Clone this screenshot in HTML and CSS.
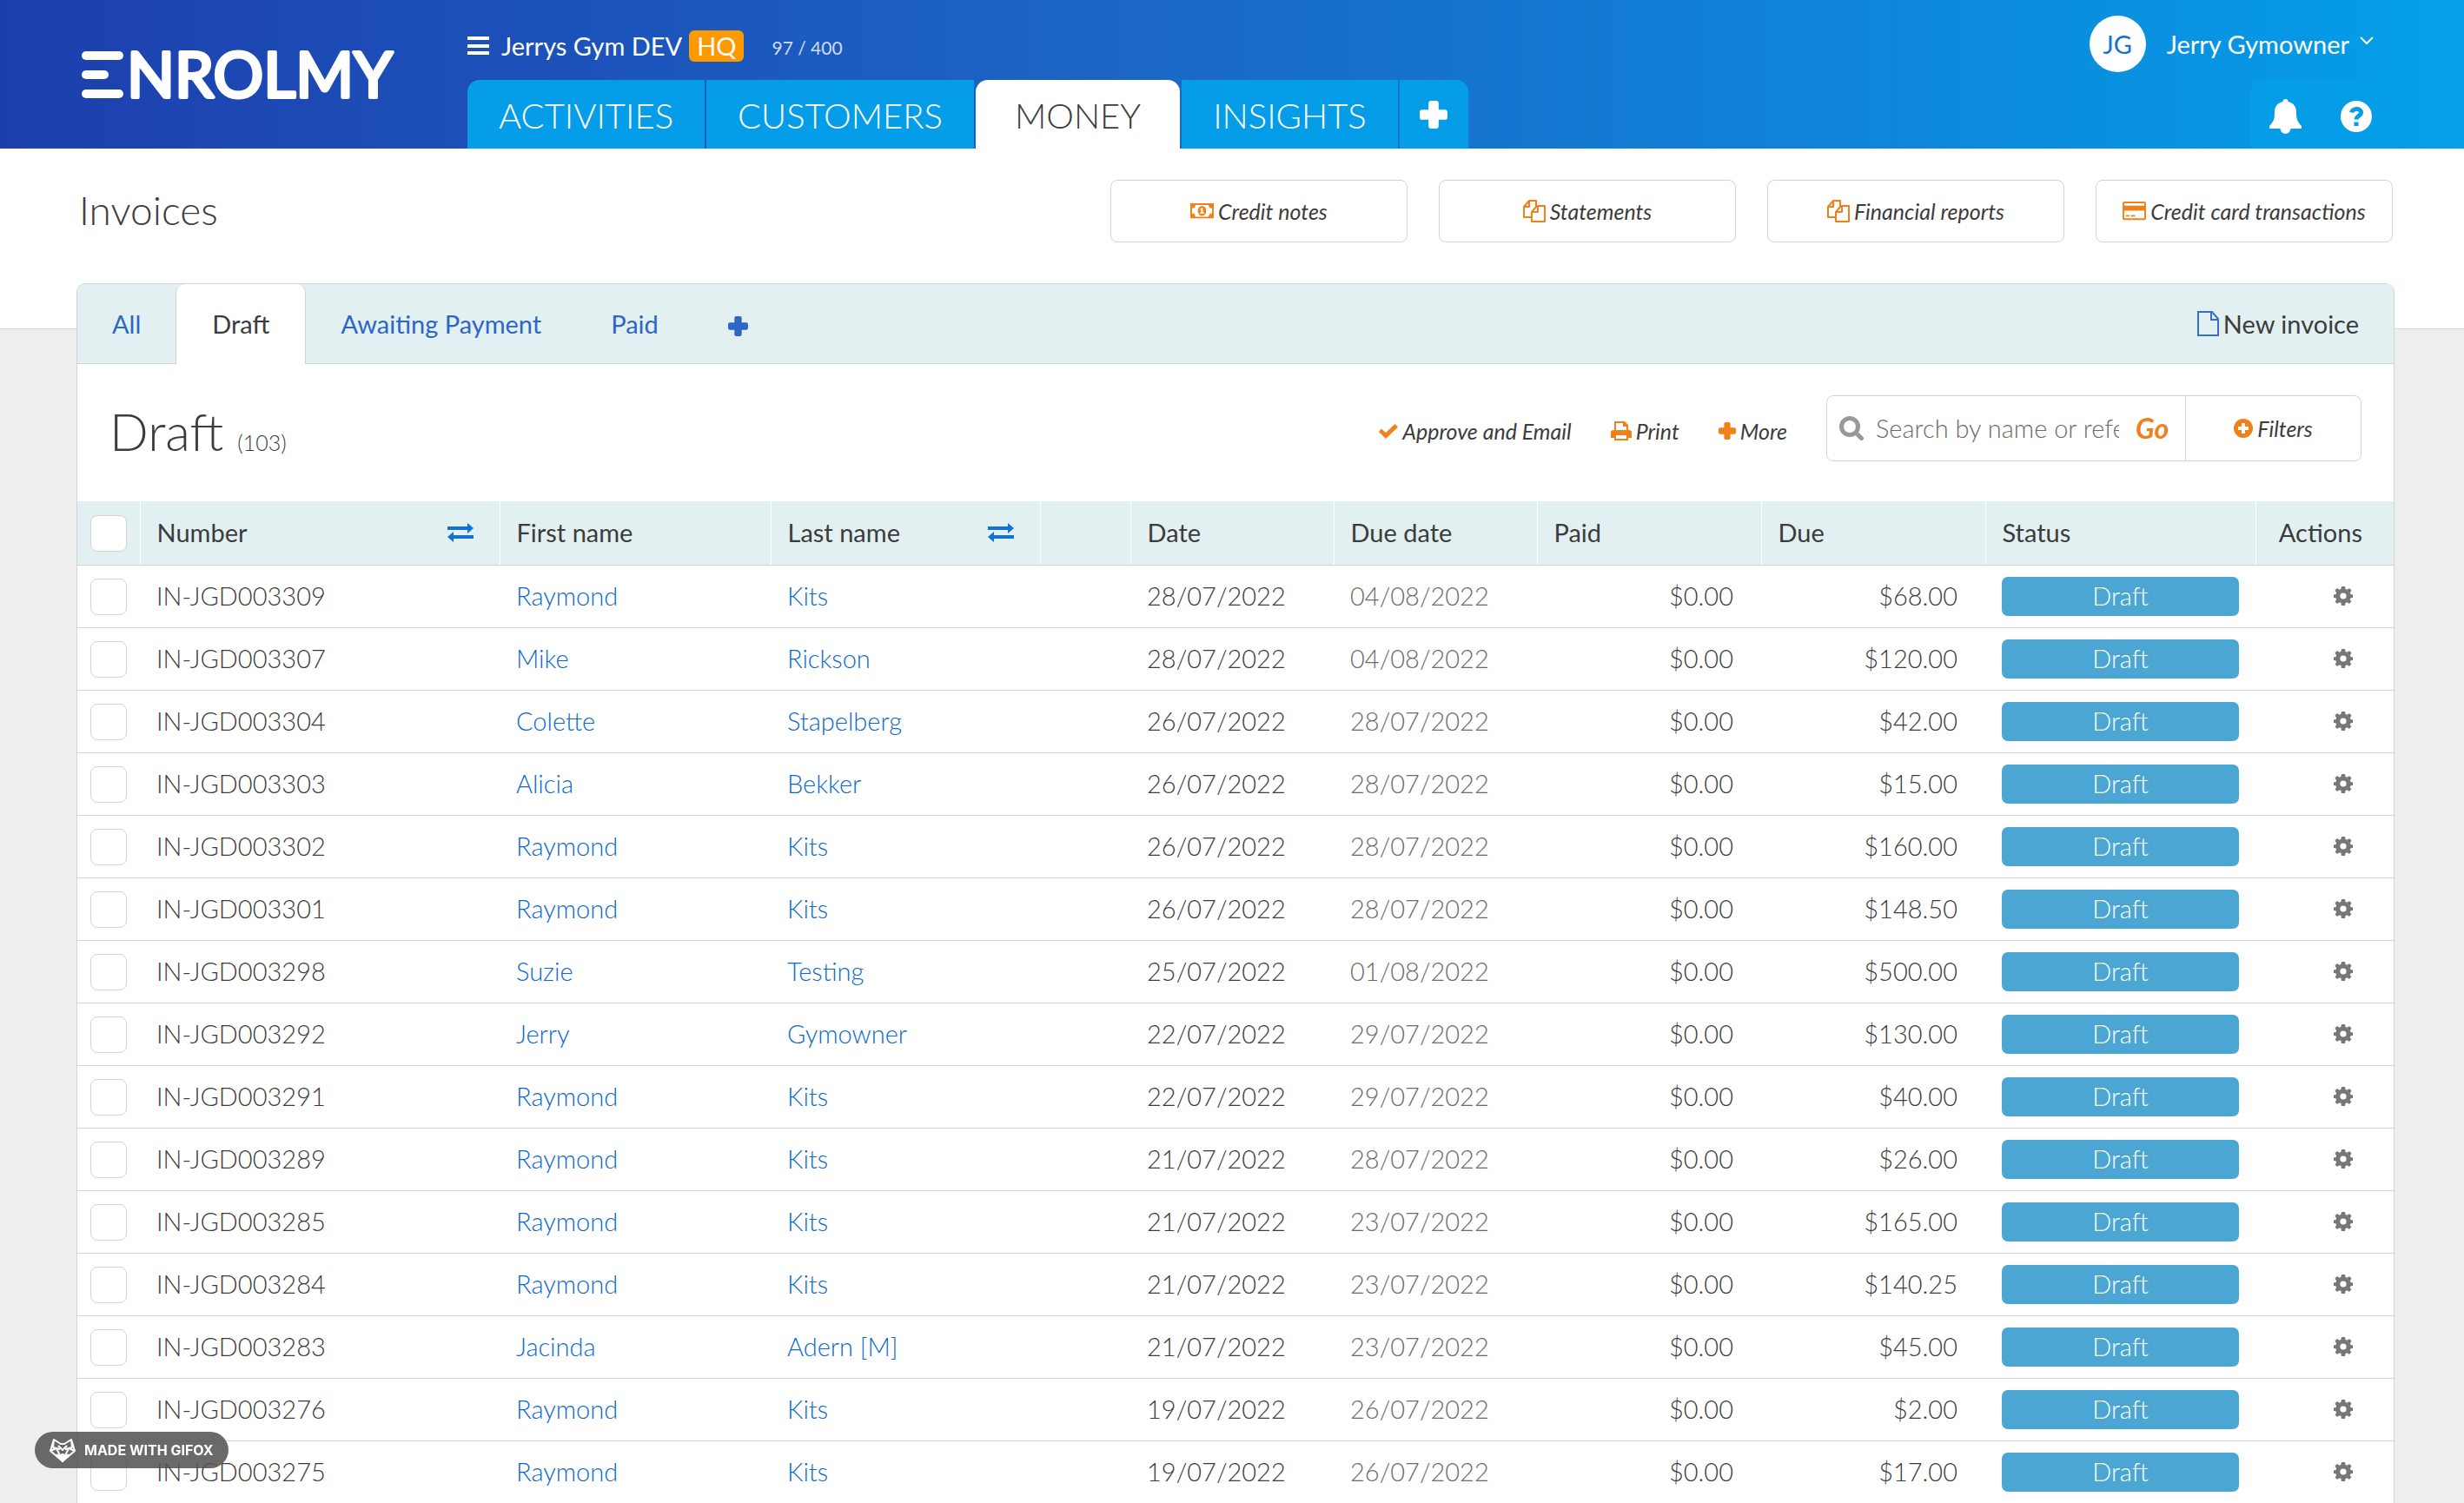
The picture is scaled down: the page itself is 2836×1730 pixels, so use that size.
FILE: index.html
```
<!DOCTYPE html>
<html lang="en">
<head>
    <meta charset="UTF-8">
    <meta name="viewport" content="width=device-width, initial-scale=1.0">
    <title>Invoices - Enrolmy</title>
    <link rel="stylesheet" href="styles.css">
</head>
<body>
    <!-- shared icons -->
    <svg class="sprite" aria-hidden="true">
        <symbol id="plus" viewBox="0 0 22 22">
            <path d="M9 0h4q2 0 2 2v5h5q2 0 2 2v4q0 2-2 2h-5v5q0 2-2 2H9q-2 0-2-2v-5H2q-2 0-2-2V9q0-2 2-2h5V2q0-2 2-2z"/>
        </symbol>
        <symbol id="copy" viewBox="0 0 26 26">
            <g fill="none" stroke="currentColor" stroke-width="2" stroke-linejoin="round">
                <path d="M9 20H1V8l6-7h8v6M7 1v7H1"/>
                <path d="M16 7h9v18H10V14zM17 7v7h-7"/>
            </g>
        </symbol>
        <symbol id="swap" viewBox="0 0 30 22">
            <path d="M0 4h23V0l7 6-7 6V8H0zM30 14v4H7v4l-7-6 7-6v4z"/>
        </symbol>
        <symbol id="gear" viewBox="0 0 22 22">
            <path fill-rule="evenodd" d="M9 0h4l.6 3 1.8.8L18 2l2.500 2.600-1.700 2.600.7 1.700 2.500.5v3.400l-2.600.6-.7 1.700 1.600 2.500L18 20l-2.600-1.700-1.800.7-.6 3H9l-.6-3-1.800-.7L4 20l-2.400-2.400 1.600-2.500-.7-1.700L0 12.800V9.400l2.500-.5.700-1.700L1.500 4.600 4 2l2.600 1.800L8.400 3zM11 7.400a3.600 3.600 0 1 0 0 7.200a3.600 3.600 0 1 0 0-7.200z"/>
        </symbol>
    </svg>

    <header class="topbar">
        <a href="#" class="logo" aria-label="Enrolmy">
            <svg viewBox="0 0 400 100">
                <rect y="23" width="48" height="10" rx="5"/>
                <rect y="45" width="31" height="10" rx="5"/>
                <rect y="67" width="48" height="10" rx="5"/>
                <text x="52" y="76">NROLMY</text>
            </svg>
        </a>

        <div class="topbar-main">
            <div class="account">
                <button type="button" class="menu-button" aria-label="Menu">
                    <svg viewBox="0 0 25 21"><path d="M0 0h25v4H0zM0 9h25v4H0zM0 17h25v4H0z"/></svg>
                </button>
                <span class="account-name">Jerrys Gym DEV</span>
                <span class="hq">HQ</span>
                <span class="usage">97 / 400</span>
            </div>
            <nav class="main-nav">
                <a href="#">ACTIVITIES</a>
                <a href="#">CUSTOMERS</a>
                <a href="#" class="active">MONEY</a>
                <a href="#">INSIGHTS</a>
                <a href="#" class="nav-add" aria-label="Add"><svg viewBox="0 0 22 22"><use href="#plus"/></svg></a>
            </nav>
        </div>

        <div class="topbar-side">
            <button type="button" class="user">
                <span class="avatar">JG</span>
                <span>Jerry Gymowner</span>
                <svg class="chevron" viewBox="0 0 16 10"><path d="M1 1l7 7 7-7"/></svg>
            </button>
            <div class="side-nav">
                <a href="#" aria-label="Notifications">
                    <svg class="bell" viewBox="0 0 37 40">
                        <path d="M18.500 0a3 3 0 0 1 3 3C28 4.500 31 9 31 15c0 8 1 11 6 16v3H0v-3c5-5 6-8 6-16C6 9 9 4.500 15.500 3a3 3 0 0 1 3-3zM12.500 34h12a6 6 0 0 1-12 0z"/>
                    </svg>
                </a>
                <a href="#" aria-label="Help">
                    <svg class="help" viewBox="0 0 36 36">
                        <circle cx="18" cy="18" r="18"/>
                        <path d="M12.500 13.500c1-5 11-5.500 11 0 0 4-5.500 4-5.500 8" class="help-mark"/>
                        <path d="M15.500 24.500h5v4.500h-5z" class="help-dot"/>
                    </svg>
                </a>
            </div>
        </div>
    </header>

    <section class="page-head">
        <h1>Invoices</h1>
        <div class="shortcuts">
            <a href="#">
                <svg class="note" viewBox="0 0 28 18">
                    <path fill-rule="evenodd" d="M0 0h28v18H0zM6 2a4 4 0 0 1-4 4v6a4 4 0 0 1 4 4h16a4 4 0 0 1 4-4V6a4 4 0 0 1-4-4zM14 3a5 6 0 1 1 0 12a5 6 0 1 1 0-12zM12 6.500v1.500h1v3h-1.500V12.500h5V11H15V5.500h-1.500z"/>
                </svg>
                Credit notes
            </a>
            <a href="#">
                <svg class="copy" viewBox="0 0 26 26"><use href="#copy"/></svg>
                Statements
            </a>
            <a href="#">
                <svg class="copy" viewBox="0 0 26 26"><use href="#copy"/></svg>
                Financial reports
            </a>
            <a href="#">
                <svg class="note" viewBox="0 0 28 22">
                    <path fill-rule="evenodd" d="M2 0h24q2 0 2 2v18q0 2-2 2H2q-2 0-2-2V2q0-2 2-2zM2 2v3h24V2zM2 11v9h24v-9zM4 16h4v2H4zM10 16h5v2h-5z"/>
                </svg>
                Credit card transactions
            </a>
        </div>
    </section>

    <main class="card">
        <nav class="tabs">
            <a href="#">All</a>
            <a href="#" class="active">Draft</a>
            <a href="#">Awaiting Payment</a>
            <a href="#">Paid</a>
            <a href="#" aria-label="Add tab"><svg class="tab-plus" viewBox="0 0 22 22"><use href="#plus"/></svg></a>
            <a href="#" class="new-invoice">
                <svg viewBox="0 0 25 29"><path d="M1 1h16l7 8v19H1zM16 1v9h8"/></svg>
                New invoice
            </a>
        </nav>

        <div class="toolbar">
            <h2>Draft <small>(103)</small></h2>
            <div class="actions">
                <button type="button">
                    <svg class="check" viewBox="0 0 22 17"><path d="M0 9l3-3.500 5 4.500L18.500 0 22 3.500 8 17z"/></svg>
                    Approve and Email
                </button>
                <button type="button">
                    <svg class="printer" viewBox="0 0 24 22">
                        <path fill-rule="evenodd" d="M4 0h12l4 4v6h1q3 0 3 3v6h-4v3H4v-3H0v-6q0-3 3-3h1zM6 2v8h12V6h-4V2zM6 16v4h12v-4z"/>
                    </svg>
                    Print
                </button>
                <button type="button">
                    <svg class="more" viewBox="0 0 22 22"><use href="#plus"/></svg>
                    More
                </button>
            </div>
            <form class="search" action="#">
                <label for="q" aria-label="Search">
                    <svg viewBox="0 0 28 28"><circle cx="12" cy="12" r="9.500"/><path d="M19 19l6.500 6.500"/></svg>
                </label>
                <input type="text" id="q" placeholder="Search by name or reference">
                <button type="submit" class="go">Go</button>
                <button type="button" class="filters">
                    <svg viewBox="0 0 22 22"><circle cx="11" cy="11" r="11"/><path d="M11 5v12M5 11h12"/></svg>
                    Filters
                </button>
            </form>
        </div>

        <table>
            <colgroup>
                <col class="c-check"><col class="c-number"><col class="c-first"><col class="c-last"><col class="c-gap">
                <col class="c-date"><col class="c-date"><col class="c-money"><col class="c-money"><col class="c-status"><col class="c-actions">
            </colgroup>
            <thead>
                <tr>
                    <th class="pick"><input type="checkbox" aria-label="Select all"></th>
                    <th><span class="sortable">Number <svg viewBox="0 0 30 22"><use href="#swap"/></svg></span></th>
                    <th>First name</th>
                    <th><span class="sortable">Last name <svg viewBox="0 0 30 22"><use href="#swap"/></svg></span></th>
                    <th></th>
                    <th>Date</th>
                    <th>Due date</th>
                    <th>Paid</th>
                    <th>Due</th>
                    <th>Status</th>
                    <th class="actions-head">Actions</th>
                </tr>
            </thead>
            <tbody id="rows"></tbody>
        </table>
    </main>

    <div class="gifox">
        <svg viewBox="0 0 30 27">
            <path d="M5 1l8 5h4l8-5 4 13-14 12L1 14zM5 1l-1 9 8 2M25 1l1 9-8 2M1 14l7-3 7 15 7-15 7 3M10 8l5 5 5-5M8 18l7 8 7-8"/>
            <path d="M10 20l5-2 5 2-5 6z" fill="#fff"/>
        </svg>
        MADE WITH GIFOX
    </div>

    <script>
        const invoices = [
            ["IN-JGD003309", "Raymond", "Kits", "28/07/2022", "04/08/2022", "$68.00"],
            ["IN-JGD003307", "Mike", "Rickson", "28/07/2022", "04/08/2022", "$120.00"],
            ["IN-JGD003304", "Colette", "Stapelberg", "26/07/2022", "28/07/2022", "$42.00"],
            ["IN-JGD003303", "Alicia", "Bekker", "26/07/2022", "28/07/2022", "$15.00"],
            ["IN-JGD003302", "Raymond", "Kits", "26/07/2022", "28/07/2022", "$160.00"],
            ["IN-JGD003301", "Raymond", "Kits", "26/07/2022", "28/07/2022", "$148.50"],
            ["IN-JGD003298", "Suzie", "Testing", "25/07/2022", "01/08/2022", "$500.00"],
            ["IN-JGD003292", "Jerry", "Gymowner", "22/07/2022", "29/07/2022", "$130.00"],
            ["IN-JGD003291", "Raymond", "Kits", "22/07/2022", "29/07/2022", "$40.00"],
            ["IN-JGD003289", "Raymond", "Kits", "21/07/2022", "28/07/2022", "$26.00"],
            ["IN-JGD003285", "Raymond", "Kits", "21/07/2022", "23/07/2022", "$165.00"],
            ["IN-JGD003284", "Raymond", "Kits", "21/07/2022", "23/07/2022", "$140.25"],
            ["IN-JGD003283", "Jacinda", "Adern [M]", "21/07/2022", "23/07/2022", "$45.00"],
            ["IN-JGD003276", "Raymond", "Kits", "19/07/2022", "26/07/2022", "$2.00"],
            ["IN-JGD003275", "Raymond", "Kits", "19/07/2022", "26/07/2022", "$17.00"]
        ];

        document.getElementById("rows").innerHTML = invoices.map(([number, first, last, date, due, amount]) => `
            <tr>
                <td class="pick"><input type="checkbox" aria-label="Select ${number}"></td>
                <td>${number}</td>
                <td><a href="#">${first}</a></td>
                <td><a href="#">${last}</a></td>
                <td></td>
                <td>${date}</td>
                <td class="muted">${due}</td>
                <td class="money">$0.00</td>
                <td class="money">${amount}</td>
                <td><span class="status">Draft</span></td>
                <td class="row-actions"><button type="button" aria-label="Actions"><svg viewBox="0 0 22 22"><use href="#gear"/></svg></button></td>
            </tr>`).join("");
    </script>
</body>
</html>
```
FILE: styles.css
```
* {
    box-sizing: border-box;
}

body {
    margin: 0;
    background-color: #eeeeee;
    color: #3c3c3c;
    font-family: Lato, "Liberation Sans", sans-serif;
    font-size: 29px;
    font-weight: 300;
    line-height: 36px;
    height: 100vh;
    overflow: hidden;
}

a {
    color: #0a6acb;
    text-decoration: none;
}

button {
    padding: 0;
    border: none;
    background: none;
    color: inherit;
    font: inherit;
    cursor: pointer;
}

svg {
    display: block;
    flex: none;
    fill: currentColor;
}

.sprite {
    position: absolute;
    width: 0;
    height: 0;
}

/* top bar */
.topbar {
    display: flex;
    height: 171px;
    padding: 0 84px 0 94px;
    background: linear-gradient(90deg, #1d3fae, #1b65c5 45%, #049fe9);
    color: #fff;
}

.logo {
    display: flex;
    align-items: center;
    width: 444px;
    color: #fff;
}

.logo svg {
    width: 400px;
    height: 100px;
}

.logo text {
    font-size: 72px;
    font-weight: 400;
    stroke: #fff;
    stroke-width: 4;
    stroke-linejoin: round;
}

.topbar-main,
.topbar-side {
    display: flex;
    flex-direction: column;
    justify-content: space-between;
}

.topbar-side {
    align-items: flex-end;
    margin-left: auto;
}

.account {
    display: flex;
    flex: 1;
    align-items: center;
    padding-top: 13px;
    font-weight: 400;
}

.menu-button svg {
    width: 25px;
    height: 21px;
}

.account-name {
    margin: 0 8px 0 14px;
}

.hq {
    padding: 0 9px;
    border-radius: 6px;
    background-color: #ff9900;
}

.usage {
    margin: 4px 0 0 32px;
    color: #cfdcf2;
    font-size: 21px;
}

.main-nav,
.side-nav {
    display: flex;
    flex: none;
    gap: 2px;
    height: 79px;
}

.main-nav a,
.side-nav a {
    display: flex;
    align-items: center;
    justify-content: center;
    padding: 2px 36px 0;
    background-color: #069de8;
    color: #fff;
    font-size: 40px;
}

.main-nav a:first-child,
.side-nav a:first-child {
    border-top-left-radius: 14px;
}

.main-nav a:last-child,
.side-nav a:last-child {
    border-top-right-radius: 14px;
}

.main-nav a.active {
    padding: 2px 45px 0;
    border-radius: 14px 14px 0 0;
    background-color: #fff;
    color: #3c3c3c;
}

.main-nav .nav-add {
    width: 79px;
    padding: 0;
}

.nav-add svg {
    width: 32px;
    height: 32px;
}

.side-nav a {
    width: 80px;
    padding: 4px 0 0;
}

.bell {
    width: 37px;
    height: 40px;
}

.help {
    width: 36px;
    height: 36px;
}

.help-mark {
    fill: none;
    stroke: #069de8;
    stroke-width: 5;
}

.help-dot {
    fill: #069de8;
}

.user {
    display: flex;
    align-items: center;
    margin: 18px 20px 0 0;
    font-weight: 400;
}

.avatar {
    width: 65px;
    margin-right: 24px;
    border-radius: 50%;
    background-color: #fff;
    color: #1173cf;
    line-height: 65px;
}

.chevron {
    width: 16px;
    height: 10px;
    margin: 0 0 8px 12px;
    fill: none;
    stroke: #fff;
    stroke-width: 2;
}

/* page title and shortcuts */
.page-head {
    display: flex;
    align-items: flex-start;
    justify-content: space-between;
    height: 208px;
    padding: 36px 82px 0 91px;
    border-bottom: 1px solid #d6d6d6;
    background-color: #fff;
}

h1 {
    margin: 0;
    font-size: 46px;
    font-weight: 300;
    line-height: 70px;
}

.shortcuts {
    display: flex;
    gap: 36px;
}

.shortcuts a {
    display: flex;
    gap: 5px;
    align-items: center;
    justify-content: center;
    width: 342px;
    height: 72px;
    border: 1px solid #d3d3d3;
    border-radius: 8px;
    color: #3c3c3c;
    font-size: 25px;
    font-style: italic;
    font-weight: 400;
}

.shortcuts svg,
.actions svg,
.filters svg {
    color: #f08019;
}

.note {
    width: 27px;
}

.copy {
    width: 26px;
    height: 26px;
}

/* invoice card */
.card {
    position: relative;
    margin: -53px 80px 0 88px;
    border: 1px solid #d3d3d3;
    border-radius: 10px 10px 0 0;
    background-color: #fff;
}

.tabs {
    display: flex;
    height: 92px;
    border-bottom: 1px solid #d3d3d3;
    border-radius: 9px 9px 0 0;
    background-color: #e2f0f1;
}

.tabs a {
    display: flex;
    align-items: center;
    padding: 0 40px;
    color: #2d66c6;
    font-weight: 400;
}

.tabs a.active {
    margin-bottom: -1px;
    padding: 0 41px;
    border: 1px solid #d3d3d3;
    border-width: 0 1px;
    border-radius: 10px 10px 0 0;
    background-color: #fff;
    color: #3c3c3c;
}

.tab-plus {
    width: 23px;
    height: 23px;
    margin-top: 6px;
}

.tabs .new-invoice {
    gap: 5px;
    margin-left: auto;
    color: #3c3c3c;
}

.new-invoice svg {
    width: 25px;
    height: 29px;
    fill: none;
    stroke: #356fcb;
    stroke-width: 2;
}

.toolbar {
    display: flex;
    align-items: flex-start;
    height: 158px;
    padding: 36px 37px 0;
}

h2 {
    margin: 0 auto 0 0;
    font-size: 59px;
    font-weight: 300;
    line-height: 84px;
}

h2 small {
    font-size: 25px;
}

.actions {
    display: flex;
    gap: 45px;
    margin-right: 45px;
    font-size: 25px;
    font-style: italic;
    font-weight: 400;
    line-height: 82px;
}

.actions button,
.filters {
    display: flex;
    gap: 5px;
    align-items: center;
}

.check {
    width: 22px;
    height: 17px;
}

.printer {
    width: 24px;
    height: 22px;
}

.more {
    width: 20px;
    height: 20px;
}

.search {
    display: flex;
    align-items: center;
    width: 616px;
    height: 76px;
    border: 1px solid #d3d3d3;
    border-radius: 8px;
}

.search label svg {
    width: 28px;
    height: 28px;
    margin: 0 14px;
    fill: none;
    stroke: #999;
    stroke-width: 5;
    stroke-linecap: round;
}

.search input {
    width: 280px;
    padding: 0;
    border: none;
    outline: none;
    background: none;
    color: #3c3c3c;
    font: inherit;
}

.search input::placeholder {
    color: #6c6c6c;
    opacity: 1;
}

.go {
    margin-left: 19px;
    color: #f08019;
    font-size: 32px;
    font-style: italic;
    font-weight: 700;
}

.filters {
    flex: 1;
    justify-content: center;
    height: 74px;
    margin-left: 19px;
    border-left: 1px solid #d3d3d3;
    font-size: 25px;
    font-style: italic;
    font-weight: 400;
}

.filters svg {
    width: 22px;
    height: 22px;
}

.filters path {
    stroke: #fff;
    stroke-width: 4;
}

/* table */
table {
    width: 100%;
    border-collapse: collapse;
    table-layout: fixed;
}

.c-check { width: 72px; }
.c-number { width: 414px; }
.c-first { width: 312px; }
.c-last { width: 310px; }
.c-gap { width: 104px; }
.c-date { width: 234px; }
.c-money { width: 258px; }
.c-status { width: 311px; }

th,
td {
    height: 72px;
    padding: 0 19px;
    border-bottom: 1px solid #d3d3d3;
    text-align: left;
}

th {
    height: 73px;
    border-right: 1px solid #fff;
    background-color: #e2f0f1;
    font-weight: 400;
    white-space: nowrap;
}

.pick {
    padding: 0 0 0 15px;
}

.pick input {
    display: block;
    width: 42px;
    height: 42px;
    margin: 2px 0 0;
    border: 1px solid #d3d3d3;
    border-radius: 8px;
    background-color: #fff;
    appearance: none;
}

.sortable {
    display: flex;
    align-items: center;
    justify-content: space-between;
}

.sortable svg {
    width: 30px;
    height: 22px;
    margin-right: 11px;
    color: #1173cf;
}

.muted {
    color: #6c6c6c;
}

.money {
    padding-right: 32px;
    text-align: right;
}

.status {
    display: block;
    height: 45px;
    border-radius: 7px;
    background-color: #4ba6d4;
    color: #fff;
    line-height: 44px;
    text-align: center;
}

th.actions-head {
    padding-right: 36px;
    border-right: none;
    text-align: right;
}

.row-actions {
    padding-right: 47px;
}

.row-actions button {
    display: block;
    margin-left: auto;
    color: #777;
}

.row-actions svg {
    width: 22px;
    height: 22px;
}

/* watermark */
.gifox {
    position: fixed;
    left: 40px;
    bottom: 40px;
    display: flex;
    gap: 10px;
    align-items: center;
    height: 42px;
    padding: 0 17px;
    border-radius: 21px;
    background-color: rgba(85, 85, 85, 0.88);
    color: #fff;
    font-family: Inter, sans-serif;
    font-size: 16px;
    font-weight: 700;
}

.gifox svg {
    width: 30px;
    height: 27px;
    fill: none;
    stroke: #fff;
    stroke-width: 2;
    stroke-linejoin: round;
}
```
